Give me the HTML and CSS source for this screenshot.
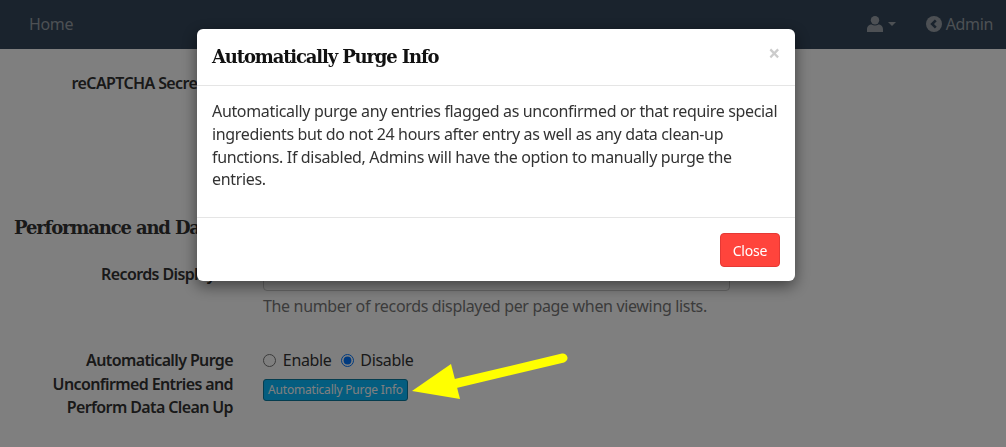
FILE: index.html
```html
<!DOCTYPE html>
<html lang="en">
<head>
    <meta charset="UTF-8">
    <title>Automatically Purge Info</title>
    <link rel="stylesheet" href="styles.css">
</head>
<body>
    <nav class="navbar">
        <a class="nav-link" href="#">Home</a>
        <div class="nav-right">
            <a class="nav-link nav-user" href="#">
                <svg class="icon-user" viewBox="0 0 16 16"><circle cx="8" cy="4.2" r="4.2"/><path d="M0 16v-2.5C0 10.5 2.2 8.6 4.6 8.6c1 .6 2.1 1 3.4 1s2.400-.4 3.400-1c2.400 0 4.600 1.900 4.600 4.900V16z"/></svg>
                <span class="caret"></span>
            </a>
            <a class="nav-link nav-admin" href="#">
                <svg class="icon-back" viewBox="0 0 16 16"><circle cx="8" cy="8" r="8"/><path class="chevron" d="M9.800 4.300 6.100 8l3.700 3.700"/></svg>
                Admin
            </a>
        </div>
    </nav>

    <main class="content">
        <div class="form-row row-captcha">
            <label class="form-label">reCAPTCHA Secret Key</label>
        </div>

        <h4 class="section-title">Performance and Data Clean Up</h4>

        <div class="form-row row-records">
            <label class="form-label">Records Displayed</label>
            <div class="form-field">
                <input class="form-input" type="text">
                <p class="help-text">The number of records displayed per page when viewing lists.</p>
            </div>
        </div>

        <div class="form-row row-purge">
            <label class="form-label">Automatically Purge Unconfirmed Entries and Perform Data Clean Up</label>
            <div class="form-field">
                <div class="radio-group">
                    <label class="radio"><input type="radio" name="purge"> Enable</label>
                    <label class="radio"><input type="radio" name="purge" checked> Disable</label>
                </div>
                <button class="btn-info" type="button">Automatically Purge Info</button>
            </div>
        </div>
    </main>

    <div class="backdrop"></div>

    <div class="modal">
        <div class="modal-header">
            <h4 class="modal-title">Automatically Purge Info</h4>
            <span class="modal-x">×</span>
        </div>
        <div class="modal-body">
            Automatically purge any entries flagged as unconfirmed or that require special ingredients but do not 24 hours after entry as well as any data clean-up functions. If disabled, Admins will have the option to manually purge the entries.
        </div>
        <div class="modal-footer">
            <button class="btn-close" type="button">Close</button>
        </div>
    </div>

    <svg class="arrow" viewBox="0 0 1006 447" width="1006" height="447">
        <path class="arrow-line" d="M563 358 445 386"/>
        <path class="arrow-head" d="M412 391 451 364 460 399z"/>
    </svg>
</body>
</html>
```

FILE: styles.css
```css
html, body {
    height: 100%;
}
body {
    margin: 0;
    overflow: hidden;
    background-color: #fff;
    color: #333;
    font-family: "Noto Sans", Arial, sans-serif;
    font-size: 16px;
    letter-spacing: -0.34px;
    line-height: 22.8px;
}

/* navbar */
.navbar {
    display: flex;
    justify-content: space-between;
    align-items: center;
    height: 49px;
    padding: 0 13px 0 29px;
    background-color: #34465a;
}
.nav-link {
    color: #9aa1a8;
    font-size: 16px;
    text-decoration: none;
}
.nav-right {
    display: flex;
    align-items: center;
    gap: 30px;
}
.nav-user, .nav-admin {
    display: flex;
    align-items: center;
}
.icon-user {
    width: 16px;
    height: 16px;
    fill: #9aa1a8;
}
.caret {
    margin-left: 5px;
    border-top: 4px solid #9aa1a8;
    border-left: 4px solid transparent;
    border-right: 4px solid transparent;
}
.icon-back {
    width: 16px;
    height: 16px;
    margin-right: 4px;
    fill: #9aa1a8;
}
.chevron {
    fill: none;
    stroke: #34465a;
    stroke-width: 2.600;
}

/* form behind the modal */
.content {
    padding: 0 14px;
}
.form-row {
    display: flex;
    gap: 30px;
}
.form-label {
    flex: 0 0 219px;
    text-align: right;
    font-weight: 600;
    letter-spacing: -0.62px;
    line-height: 23.4px;
    color: #333;
}
.form-field {
    width: 467px;
}
.row-captcha {
    margin-top: 22.6px;
    height: 144px;
}
.section-title {
    margin: 0;
    font-family: "DejaVu Serif", Georgia, serif;
    font-size: 18px;
    font-weight: 700;
    letter-spacing: -1.15px;
    line-height: 24px;
}
.row-records {
    margin-top: 17.4px;
}
.row-records .form-label {
    padding-top: 6px;
}
.form-input {
    display: block;
    box-sizing: border-box;
    width: 100%;
    height: 34px;
    border: 1px solid #ccc;
    border-radius: 4px;
}
.help-text {
    margin: 3.600px 0 0;
    color: #777;
}
.row-purge {
    margin-top: 32px;
}
.radio-group {
    display: flex;
    gap: 9px;
}
.radio input {
    margin: 0 3px 0 0;
    vertical-align: -1px;
}
.btn-info {
    display: block;
    box-sizing: border-box;
    width: 145px;
    height: 22px;
    margin-top: 6.500px;
    padding: 0;
    border: 1px solid #0b7a9e;
    border-radius: 3px;
    background-color: #08baff;
    color: #fff;
    font-family: inherit;
    font-size: 12px;
    letter-spacing: -0.2px;
    line-height: 20px;
}

/* modal */
.backdrop {
    position: fixed;
    inset: 0;
    background-color: rgba(0, 0, 0, 0.5);
}
.modal {
    position: fixed;
    top: 29px;
    left: 197px;
    width: 598px;
    height: 252px;
    border-radius: 6px;
    background-color: #fff;
    box-shadow: 0 5px 15px rgba(0, 0, 0, 0.5);
}
.modal-header {
    display: flex;
    justify-content: space-between;
    align-items: center;
    box-sizing: border-box;
    height: 57px;
    padding: 0 15px;
    border-bottom: 1px solid #e5e5e5;
}
.modal-title {
    margin: 0;
    color: #111;
    font-family: "DejaVu Serif", Georgia, serif;
    font-size: 18px;
    font-weight: 700;
    letter-spacing: -1.15px;
}
.modal-x {
    margin-top: -8px;
    color: #ccc;
    font-size: 21px;
    font-weight: 700;
}
.modal-body {
    box-sizing: border-box;
    height: 132px;
    padding: 14px 15px;
    border-bottom: 1px solid #e5e5e5;
}
.modal-footer {
    display: flex;
    justify-content: flex-end;
    padding: 15px 15px 14px;
}
.btn-close {
    box-sizing: border-box;
    width: 60px;
    height: 34px;
    border: 1px solid #e53935;
    border-radius: 4px;
    background-color: #ff443c;
    color: #fff;
    font-family: inherit;
    font-size: 14px;
    letter-spacing: -0.2px;
}

/* annotation drawn on top of the screenshot */
.arrow {
    position: fixed;
    top: 0;
    left: 0;
    pointer-events: none;
}
.arrow-line {
    fill: none;
    stroke: #ffff00;
    stroke-width: 9;
    stroke-linecap: round;
}
.arrow-head {
    fill: #ffff00;
}
```
